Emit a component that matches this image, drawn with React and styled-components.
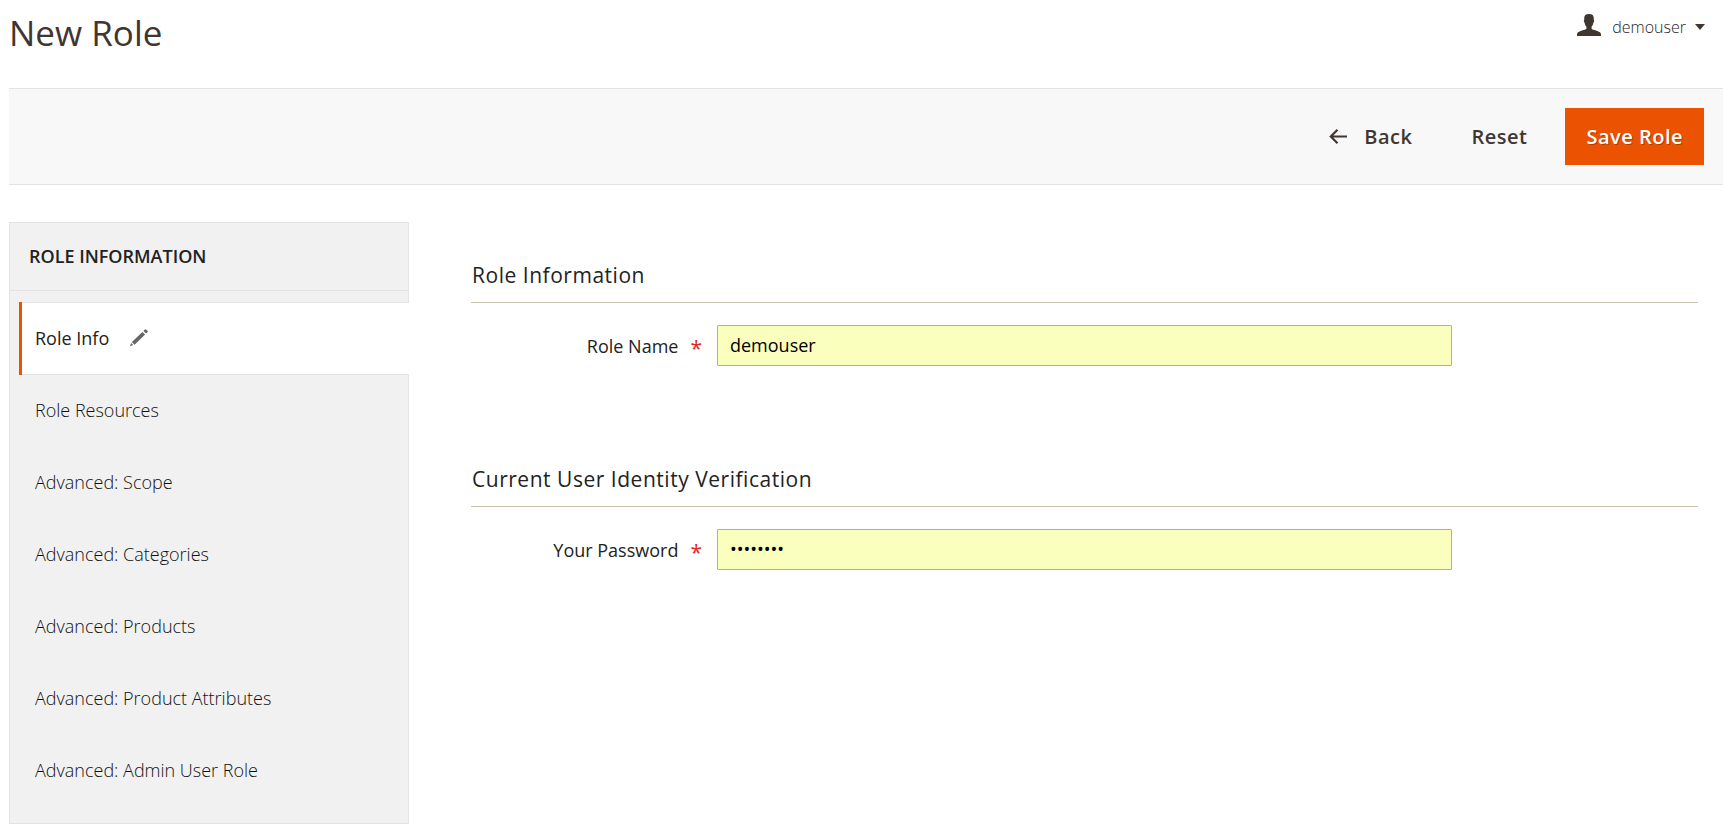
import { useState } from 'react';
import styled, { createGlobalStyle } from 'styled-components';

const GlobalStyle = createGlobalStyle`
  *, *::before, *::after {
    box-sizing: border-box;
  }

  body {
    margin: 0;
    background: #fff;
    color: #222;
    font-family: 'Open Sans', 'Noto Sans', sans-serif;
    font-size: 18px;
    line-height: 24px;
  }

  button, input {
    font-family: inherit;
  }
`;

const Page = styled.div`
  padding: 8px 6px 12px 9px;
`;

const Header = styled.header`
  display: flex;
  align-items: flex-start;
  justify-content: space-between;
  height: 80px;
  padding-right: 18px;
`;

const Title = styled.h1`
  margin: 0;
  color: #41362f;
  font-size: 35px;
  font-weight: 400;
  line-height: 50px;
`;

const UserButton = styled.button`
  display: flex;
  align-items: center;
  padding: 3px 0;
  border: 0;
  background: none;
  color: #2b2320;
  font-size: 16px;
  font-weight: 300;
  line-height: 24px;
  cursor: pointer;
`;

const UserName = styled.span`
  display: flex;
  align-items: center;
  gap: 9px;
  margin-left: 11px;
  padding-top: 4px;
`;

const Toolbar = styled.div`
  display: flex;
  align-items: center;
  justify-content: flex-end;
  padding: 19px;
  border-top: 1px solid #e3e3e3;
  border-bottom: 1px solid #e3e3e3;
  background: #f8f8f8;
`;

const Button = styled.button`
  display: flex;
  align-items: center;
  gap: 17px;
  height: 57px;
  margin-right: ${props => (props.$primary ? '0' : '17px')};
  padding: 0 21px;
  border: 0;
  background: ${props => (props.$primary ? '#eb5202' : 'transparent')};
  color: ${props => (props.$primary ? '#fff' : '#41362f')};
  font-size: 20px;
  font-weight: 600;
  letter-spacing: 0.025em;
  text-shadow: ${props => (props.$primary ? '1px 1px 0 rgba(0, 0, 0, 0.25)' : 'none')};
  cursor: pointer;
`;

const Columns = styled.div`
  display: flex;
  align-items: flex-start;
  margin-top: 37px;
`;

const Sidebar = styled.nav`
  flex: 0 0 400px;
  border: 1px solid #e3e3e3;
  background: #f1f1f1;
`;

const SidebarTitle = styled.h2`
  margin: 0;
  padding: 21px 19px 22px;
  border-bottom: 1px solid #e3e3e3;
  font-size: 18px;
  font-weight: 600;
  line-height: 24px;
  text-transform: uppercase;
`;

const TabList = styled.ul`
  margin: 0;
  padding: 11px 0 16px 9px;
  list-style: none;
`;

const Tab = styled.li`
  margin-right: ${props => (props.$active ? '-1px' : '0')};
  border-left: 3px solid ${props => (props.$active ? '#eb5202' : 'transparent')};
  background: ${props => (props.$active ? '#fff' : 'transparent')};
`;

const TabLink = styled.a`
  display: flex;
  align-items: center;
  gap: 21px;
  height: ${props => (props.$active ? '73px' : '72px')};
  padding: 0 13px 2px;
  border: solid ${props => (props.$active ? '#e3e3e3' : 'transparent')};
  border-width: 1px 0;
  color: ${props => (props.$active ? '#222' : '#111')};
  font-weight: ${props => (props.$active ? '500' : '300')};
  text-decoration: none;
`;

const Form = styled.form`
  flex: 1;
  padding: 38px 25px 0 62px;
`;

const Section = styled.section`
  margin-bottom: 98px;
`;

const SectionTitle = styled.h3`
  margin: 0 0 22px;
  padding: 0 1px 12px;
  border-bottom: 1px solid #cac3b4;
  font-size: 21px;
  font-weight: 500;
  letter-spacing: 0.025em;
  line-height: 30px;
`;

const Field = styled.div`
  display: grid;
  grid-template-columns: 20% 60%;
  align-items: center;
  padding: 0 1px;
`;

const Label = styled.label`
  display: flex;
  align-items: center;
  justify-content: flex-end;
  gap: 12px;
  padding-right: 15px;
  font-weight: 500;
`;

const Required = styled.span`
  padding-top: 4px;
  color: #e22626;
  font-size: 21px;
  font-weight: 400;
`;

const Input = styled.input`
  width: 100%;
  height: 41px;
  padding: 0 12px 2px;
  border: 1px solid #adadad;
  border-radius: 1px;
  background: #faffbd;
  color: #000;
  font-size: 18px;
  font-weight: 400;
`;

const tabs = [
  'Role Info',
  'Role Resources',
  'Advanced: Scope',
  'Advanced: Categories',
  'Advanced: Products',
  'Advanced: Product Attributes',
  'Advanced: Admin User Role',
];

const UserIcon = () => (
  <svg width="24" height="22" viewBox="0 0 24 22" fill="#41362f" aria-hidden="true">
    <path d="M12 0C8.600 0 7.200 1.500 7.200 4.200v1.900c-.6.300-.4 2.300.4 2.600.3 1.800.9 3 1.800 3.900v2.100C8.600 16 1.500 16.800.4 19c-.3.600-.4 1.800-.4 3h24c0-1.200-.1-2.400-.4-3-1.100-2.200-8.200-3-9-4.300v-2.100c.9-.9 1.500-2.100 1.800-3.900.8-.3 1-2.300.4-2.600V4.200C16.800 1.500 15.400 0 12 0z" />
  </svg>
);

const CaretIcon = () => (
  <svg width="10" height="6" viewBox="0 0 10 6" fill="#41362f" aria-hidden="true">
    <path d="M0 0h10L5 6z" />
  </svg>
);

const BackIcon = () => (
  <svg width="18" height="16" viewBox="0 0 18 16" fill="none" stroke="#41362f" strokeWidth="2.200" aria-hidden="true">
    <path d="M18 7.500H2M8.500 .8L1.800 7.500l6.700 6.700" />
  </svg>
);

const PencilIcon = () => (
  <svg width="18" height="18" viewBox="0 0 18 18" fill="#666" aria-hidden="true">
    <path d="M0 17.200l1.100-3.200 2.100 2.100zM1.900 13L12.400 2.900l2.700 2.700L4.600 15.700zM13.400 1.900L14.900.4q.6-.5 1.200 0l1.500 1.500q.5.600 0 1.200L16.100 4.600z" />
  </svg>
);

const App = () => {
  const [active, setActive] = useState('Role Info');
  const [roleName, setRoleName] = useState('demouser');
  const [password, setPassword] = useState('password');

  return (
    <Page>
      <GlobalStyle />
      <Header>
        <Title>New Role</Title>
        <UserButton type="button">
          <UserIcon />
          <UserName>
            demouser
            <CaretIcon />
          </UserName>
        </UserButton>
      </Header>
      <Toolbar>
        <Button type="button"><BackIcon />Back</Button>
        <Button type="reset" form="role-form">Reset</Button>
        <Button type="submit" form="role-form" $primary>Save Role</Button>
      </Toolbar>
      <Columns>
        <Sidebar>
          <SidebarTitle>Role Information</SidebarTitle>
          <TabList>
            {tabs.map(tab => (
              <Tab key={tab} $active={tab === active}>
                <TabLink href="#" $active={tab === active} onClick={() => setActive(tab)}>
                  {tab}
                  {tab === active && <PencilIcon />}
                </TabLink>
              </Tab>
            ))}
          </TabList>
        </Sidebar>
        <Form id="role-form" onSubmit={e => e.preventDefault()}>
          <Section>
            <SectionTitle>Role Information</SectionTitle>
            <Field>
              <Label htmlFor="role-name">Role Name <Required>*</Required></Label>
              <Input id="role-name" type="text" value={roleName} onChange={e => setRoleName(e.target.value)} />
            </Field>
          </Section>
          <Section>
            <SectionTitle>Current User Identity Verification</SectionTitle>
            <Field>
              <Label htmlFor="current-password">Your Password <Required>*</Required></Label>
              <Input id="current-password" type="password" value={password} onChange={e => setPassword(e.target.value)} />
            </Field>
          </Section>
        </Form>
      </Columns>
    </Page>
  );
};

export default App;
